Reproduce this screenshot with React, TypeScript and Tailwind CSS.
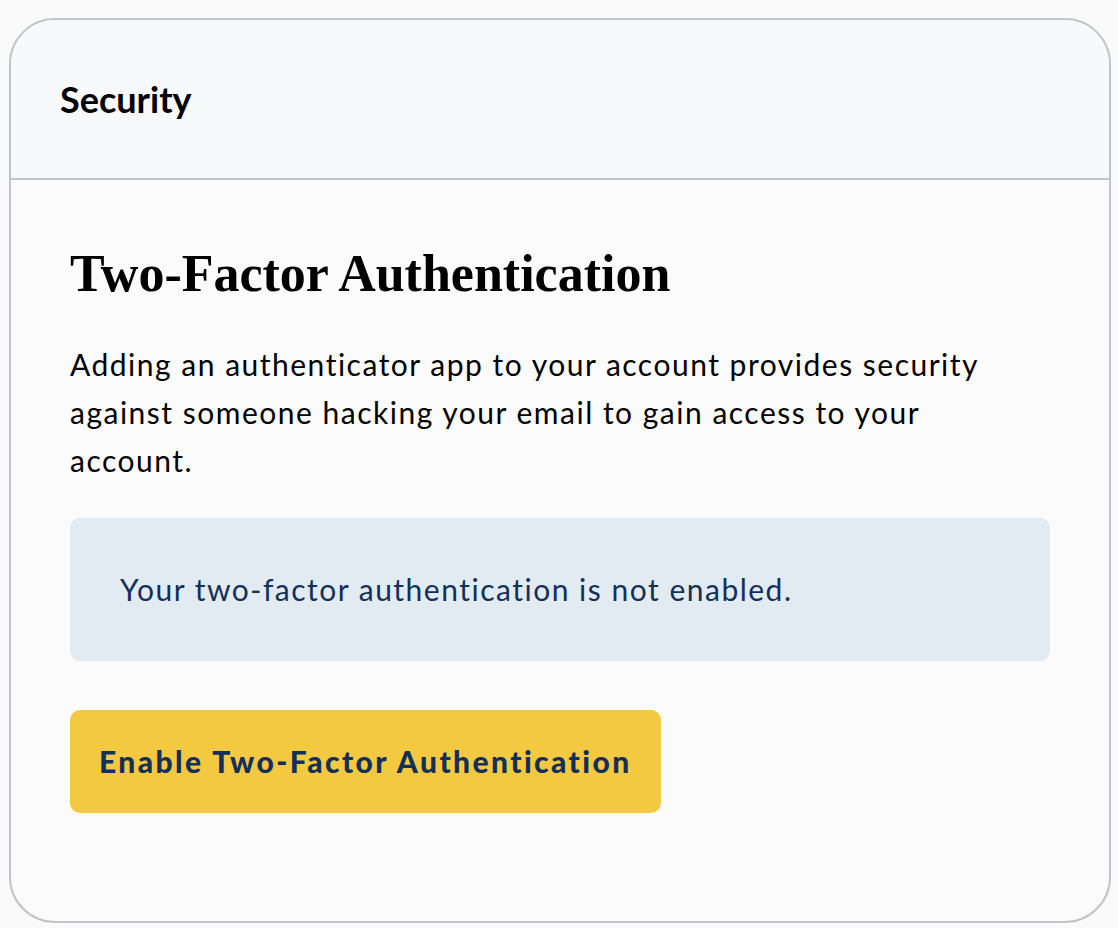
export default function App() {
  return (
    <div className="min-h-[928px] w-full bg-[#fafafa] pt-[18px] pl-[9px]">
      <div className="w-[1102px] h-[905px] rounded-[46px] border-2 border-[#c2c4c8] bg-[#fbfbfb] overflow-hidden flex flex-col">
        <div className="h-[160px] shrink-0 bg-[#f8f9fb] border-b-2 border-[#c2c4c8] flex items-center px-[49px]">
          <h2 className="text-[36px] font-bold text-black" style={{ fontFamily: 'Lato, sans-serif' }}>
            Security
          </h2>
        </div>
        <div className="px-[59px] pt-[63px]" style={{ fontFamily: 'Lato, sans-serif' }}>
          <h1
            className="text-[52px] leading-[62px] font-bold text-black"
            style={{ fontFamily: '"Liberation Serif", serif' }}
          >
            Two-Factor Authentication
          </h1>
          <p className="mt-[35px] text-[30px] leading-[48px] tracking-[1.5px] text-black">
            Adding an authenticator app to your account provides security against someone hacking your email to gain access to your account.
          </p>
          <div className="mt-[34px] h-[143px] rounded-[10px] bg-[#e2eaf2] flex items-center px-[50px]">
            <p className="text-[30px] tracking-[1.5px] text-[#13305a]">Your two-factor authentication is not enabled.</p>
          </div>
          <button className="mt-[49px] h-[103px] px-[29px] rounded-[10px] bg-[#f4c942] text-[30px] font-black tracking-[2.4px] text-[#13305a]">
            Enable Two-Factor Authentication
          </button>
        </div>
      </div>
    </div>
  )
}
